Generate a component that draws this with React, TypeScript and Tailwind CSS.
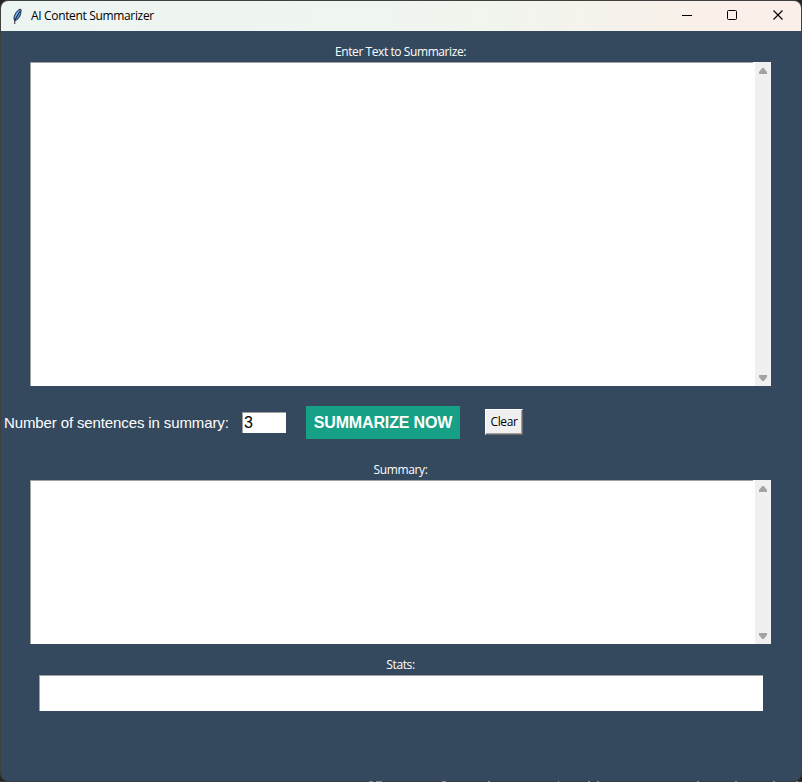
import type { ReactNode } from "react";

const UI = "font-['Open_Sans','Noto_Sans',sans-serif]";
const ARIAL = "font-['Liberation_Sans',Arial,sans-serif]";

function Feather() {
  return (
    <svg className="h-[17px] w-[10px]" viewBox="0 0 10 17">
      <path d="M8.9 1.2C6.4 1.2 4.4 3.6 3 6.4C1.9 8.7 1.6 10.8 2.6 12.6C5.4 12.2 7.4 9.8 8.4 6.8C9 4.8 9.3 2.8 8.9 1.2Z" fill="#4d8fdc" stroke="#17202c" strokeWidth="0.9" />
      <path d="M7.6 2.6C5.8 3.6 4.4 5.6 3.5 7.8L3 10.4L5.4 6.8Z" fill="#8dbdf0" />
      <path d="M7.9 3.2L5 8L2.8 12.5V16" stroke="#0c141e" strokeWidth="0.9" fill="none" />
    </svg>
  );
}

function TitleBar() {
  return (
    <header className="flex h-[30px] shrink-0 items-center bg-linear-to-r from-[#edf5f3] from-0% via-[#f0f5ee] via-60% to-[#faf0e9] to-90% pl-[11px] text-black">
      <Feather />
      <h1 className={`ml-[9px] grow text-[12px] leading-4 tracking-[-0.34px] ${UI}`}>AI Content Summarizer</h1>
      <svg className="h-[30px] w-[137px]" viewBox="0 0 137 30" fill="none" stroke="#000">
        <path d="M18 14.5H28" />
        <rect x="63.5" y="9.5" width="9" height="9" rx="1" />
        <path d="M109.5 9.5L118.5 18.5M118.5 9.5L109.5 18.5" strokeWidth="1.1" />
      </svg>
    </header>
  );
}

function Label({ children, className }: { children: ReactNode; className: string }) {
  return <div className={`pr-px text-center text-[12px] leading-4 text-white ${UI} ${className}`}>{children}</div>;
}

function Arrow({ down = false }: { down?: boolean }) {
  return (
    <svg className={`h-[6px] w-2 ${down ? "rotate-180" : ""}`} viewBox="0 0 8 6">
      <path d="M3.2 0H4.8L8 4V6H0V4Z" fill="#a3a3a3" />
    </svg>
  );
}

function ScrolledText({ className }: { className: string }) {
  return (
    <div className={`ml-[29px] flex w-[741px] ${className}`}>
      <div className="grow border-t border-l border-[#a0a0a0] bg-white" />
      <div className="w-[2px] bg-white" />
      <div className="flex w-4 flex-col items-center justify-between bg-[#f0f0f0] pt-[6px] pb-[5px]">
        <Arrow />
        <Arrow down />
      </div>
    </div>
  );
}

function DesktopEdge() {
  return (
    <svg className="block h-px w-[802px] shrink-0 bg-[#353b42]" viewBox="0 0 802 1" fill="#9c8580">
      <path fill="#7b8794" d="M369 0h4v1h-4zM376 0h6v1h-6z" />
      <path d="M442 0h4v1h-4zM488 0h2v1h-2zM558 0h1v1h-1zM588 0h2v1h-2zM597 0h2v1h-2zM697 0h2v1h-2zM735 0h2v1h-2zM773 0h2v1h-2zM796 0h2v1h-2z" />
    </svg>
  );
}

export default function App() {
  return (
    <div className="flex h-[782px] w-[802px] flex-col overflow-hidden bg-[#252525]">
      <div className="flex h-[781px] flex-col overflow-hidden rounded-lg border border-b-0 border-[#403f40] bg-[#34495e]">
        <TitleBar />
        <main className="flex flex-col">
          <Label className="mt-[13px] tracking-[-0.42px]">Enter Text to Summarize:</Label>
          <ScrolledText className="mt-[2px] h-[324px]" />
          <div className="mt-5 flex h-[33px] items-center">
            <span className={`ml-[3px] w-[238px] text-[15px] leading-5 tracking-[-0.12px] whitespace-nowrap text-white ${ARIAL}`}>
              Number of sentences in summary:
            </span>
            <div className={`flex h-[21px] w-[44px] items-center border-t border-l border-[#a0a0a0] bg-white pl-px text-[16px] leading-5 text-black ${ARIAL}`}>
              3
            </div>
            <button className={`ml-5 h-[33px] w-[154px] bg-[#16a085] text-[16px] font-bold tracking-[-0.14px] whitespace-nowrap text-white ${ARIAL}`}>
              SUMMARIZE NOW
            </button>
            <button className={`mb-[2px] ml-[25px] h-[26px] w-[38px] border border-t-white border-r-[#696969] border-b-[#696969] border-l-white bg-[#f0f0f0] text-[12px] leading-4 tracking-[-0.35px] text-black shadow-[inset_-1px_-1px_0_#a0a0a0] ${UI}`}>
              Clear
            </button>
          </div>
          <Label className="mt-[23px] tracking-[-0.37px]">Summary:</Label>
          <ScrolledText className="mt-[2px] h-[164px]" />
          <Label className="mt-[13px] tracking-[-0.4px]">Stats:</Label>
          <div className="mt-[2px] ml-[38px] h-[36px] w-[724px] border-t border-l border-[#a0a0a0] bg-white" />
        </main>
      </div>
      <DesktopEdge />
    </div>
  );
}
